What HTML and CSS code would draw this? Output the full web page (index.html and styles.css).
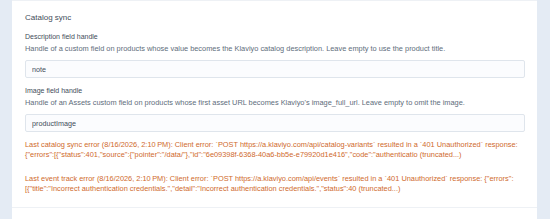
FILE: index.html
```html
<!DOCTYPE html>
<html>

<head>
	<meta charset="utf-8">
	<title>Klaviyo settings</title>
	<link rel="stylesheet" href="styles.css">
</head>

<body>
	<div class="page">
		<div class="card">
			<div class="card-body">
				<h2 class="title">Catalog sync</h2>
				<div class="field">
					<div class="label">Description field handle</div>
					<div class="help">Handle of a custom field on products whose value becomes the Klaviyo catalog description. Leave empty to use the product title.</div>
					<input class="text" type="text" value="note" />
				</div>
				<div class="field">
					<div class="label">Image field handle</div>
					<div class="help">Handle of an Assets custom field on products whose first asset URL becomes Klaviyo's image_full_url. Leave empty to omit the image.</div>
					<input class="text" type="text" value="productImage" />
				</div>
				<p class="error">Last catalog sync error (8/16/2026, 2:10&#8239;PM): Client error: `POST https://a.klaviyo.com/api/catalog-variants` resulted in a `401 Unauthorized` response:<br>{"errors":[{"status":401,"source":{"pointer":"/data/"},"id":"6e09398f-6368-40a6-bb5e-e79920d1e416","code":"authenticatio (truncated...)</p>
				<p class="error">Last event track error (8/16/2026, 2:10&#8239;PM): Client error: `POST https://a.klaviyo.com/api/events` resulted in a `401 Unauthorized` response: {"errors":<br>[{"title":"Incorrect authentication credentials.","detail":"Incorrect authentication credentials.","status":40 (truncated...)</p>
			</div>
			<div class="card-footer"></div>
		</div>
	</div>
</body>

</html>
```

FILE: styles.css
```css
* {
	margin: 0;
	padding: 0;
	box-sizing: border-box;
}
body {
	background-color: #e4ebf4;
	font-family: "Liberation Sans", Arial, sans-serif;
	color: #3f4d5a;
}
.page {
	padding: 0 13px 0 12px;
}
.card {
	background-color: #ffffff;
	border-top: 1px solid #eef1f5;
	height: 219px;
}
.card-body {
	padding: 12px 12px 0 13px;
	height: 207px;
	border-bottom: 1px solid #eef1f5;
}
.title {
	font-size: 8px;
	font-weight: normal;
	line-height: 10px;
	color: #3f4d5a;
	margin-bottom: 9px;
}
.field {
	margin-bottom: 8px;
}
.label {
	font-size: 7px;
	line-height: 10px;
	color: #3f4d5a;
	margin-bottom: 2px;
}
.help {
	font-size: 7.4px;
	line-height: 10px;
	color: #606d7b;
	margin-bottom: 6px;
}
.text {
	display: block;
	width: 100%;
	height: 18px;
	padding: 0 6px;
	font-family: inherit;
	font-size: 7.2px;
	color: #3f4d5a;
	background-color: #fbfcfe;
	border: 1px solid #dfe5ec;
	border-radius: 2px;
	outline: none;
}
.error {
	font-size: 7.4px;
	line-height: 10px;
	color: #cf6a2c;
	margin-top: 3px;
	margin-bottom: 14px;
}
.card-footer {
	height: 11px;
	background-color: #ffffff;
}
```
